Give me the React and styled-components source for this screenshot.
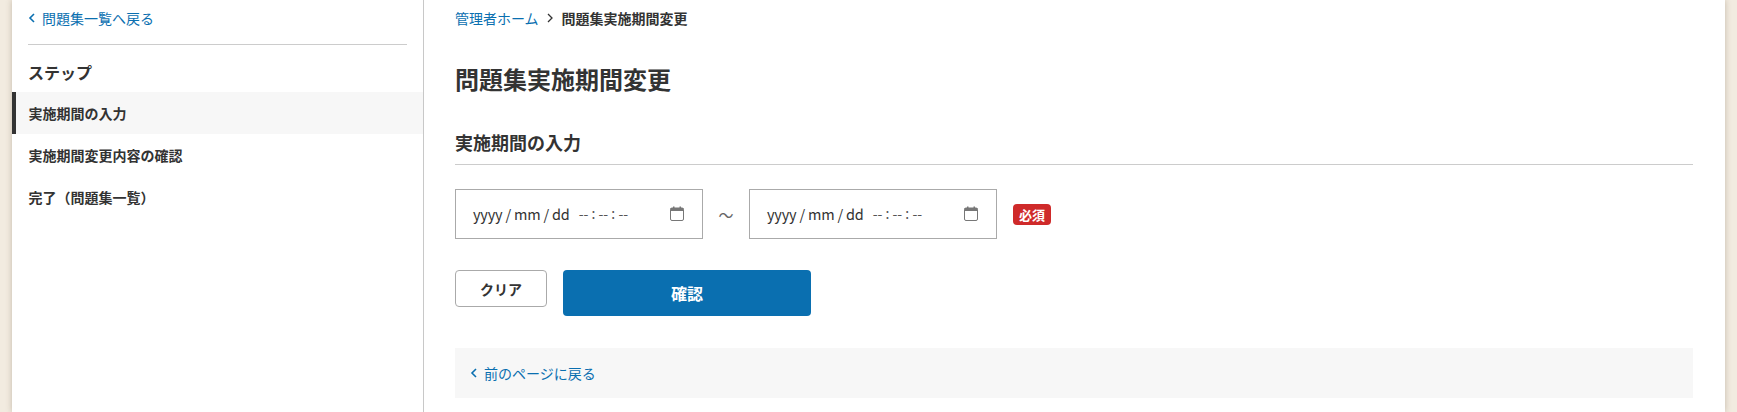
import React from 'react';
import styled, { createGlobalStyle } from 'styled-components';

const GlobalStyle = createGlobalStyle`
  html, body {
    margin: 0;
    height: 100%;
    overflow: hidden;
    background: #f2ebe0;
  }
  body {
    font-family: "Noto Sans CJK JP", "Noto Sans", sans-serif;
    color: #333;
  }
`;

const Page = styled.div`
  width: 1737px;
  height: 412px;
  padding: 0 12px;
  box-sizing: border-box;
  overflow: hidden;
`;

const Shell = styled.div`
  display: flex;
  height: 412px;
  background: #fff;
  box-shadow: 0 0 6px rgba(90, 70, 40, 0.3);
`;

const Sidebar = styled.aside`
  width: 412px;
  flex: none;
  box-sizing: border-box;
  border-right: 1px solid #c8c8c8;
`;

const BackRow = styled.div`
  margin: 0 16px;
  height: 45px;
  box-sizing: border-box;
  padding-top: 5px;
  border-bottom: 1px solid #ccc;
`;

const TextLink = styled.a`
  display: inline-flex;
  align-items: center;
  gap: 6px;
  font-size: 14px;
  line-height: 22px;
  color: #0a6fb0;
  text-decoration: none;
`;

const StepsTitle = styled.h2`
  margin: 15px 0 8px 16px;
  font-size: 16px;
  line-height: 24px;
  font-weight: 700;
`;

const StepList = styled.ul`
  list-style: none;
  margin: 0;
  padding: 0;
`;

const Step = styled.li`
  height: 42px;
  box-sizing: border-box;
  padding-left: ${p => (p.$active ? 12.5 : 16.5)}px;
  display: flex;
  align-items: center;
  font-size: 14px;
  font-weight: 700;
  background: ${p => (p.$active ? '#f7f7f7' : 'transparent')};
  border-left: ${p => (p.$active ? '4px solid #333' : 'none')};
`;

const Main = styled.main`
  flex: 1;
  padding: 7px 32px 0 31px;
  min-width: 0;
`;

const Breadcrumb = styled.nav`
  display: flex;
  align-items: center;
  gap: 7px;
  height: 22px;
  font-size: 14px;
  font-weight: 700;
`;

const CrumbLink = styled.a`
  color: #0a6fb0;
  font-weight: 400;
  text-decoration: none;
`;

const Title = styled.h1`
  margin: 32px 0 0;
  font-size: 24px;
  line-height: 36px;
  font-weight: 700;
`;

const SectionTitle = styled.h2`
  margin: 32px 0 0;
  height: 35px;
  font-size: 18px;
  line-height: 27px;
  font-weight: 700;
  border-bottom: 1px solid #ccc;
`;

const DateRow = styled.div`
  display: flex;
  align-items: center;
  margin-top: 24px;
`;

const DateField = styled.div`
  width: 248px;
  height: 50px;
  box-sizing: border-box;
  border: 1px solid #aaa;
  padding: 0 18px 2px 17px;
  display: flex;
  align-items: center;
  font-size: 14.5px;
`;

const DateText = styled.span`
  letter-spacing: -0.2px;
`;

const TimeText = styled.span`
  margin-left: 9px;
  font-size: 14px;
  flex: 1;
  color: #555;
`;

const Tilde = styled.span`
  width: 46px;
  text-align: center;
  font-size: 15px;
  color: #666;
`;

const Badge = styled.span`
  margin-left: 16px;
  width: 38px;
  height: 21px;
  display: flex;
  align-items: center;
  justify-content: center;
  background: #cf2a2a;
  border-radius: 4px;
  color: #fff;
  font-size: 13px;
  font-weight: 700;
`;

const ButtonRow = styled.div`
  display: flex;
  align-items: flex-start;
  gap: 16px;
  margin-top: 31px;
`;

const ClearButton = styled.button`
  width: 92px;
  height: 37px;
  padding: 0;
  box-sizing: border-box;
  background: #fff;
  border: 1px solid #aaa;
  border-radius: 4px;
  color: #333;
  font: 700 14px "Noto Sans CJK JP", sans-serif;
`;

const ConfirmButton = styled.button`
  width: 248px;
  height: 46px;
  padding: 0;
  border: none;
  border-radius: 4px;
  background: #0a6fb0;
  color: #fff;
  font: 700 16px "Noto Sans CJK JP", sans-serif;
`;

const BackPanel = styled.div`
  margin-top: 32px;
  height: 50px;
  box-sizing: border-box;
  padding-left: 15px;
  display: flex;
  align-items: center;
  background: #f7f7f7;
`;

const ChevronLeft = () => (
  <svg width="8" height="12" viewBox="0 0 8 12" fill="none" stroke="#0a6fb0" strokeWidth="1.6">
    <path d="M6 2 L2 6 L6 10" />
  </svg>
);

const ChevronRight = () => (
  <svg width="9" height="12" viewBox="0 0 9 12" fill="none" stroke="#333" strokeWidth="1.3">
    <path d="M2 2 L6 6 L2 10" />
  </svg>
);

const CalendarIcon = () => (
  <svg width="14" height="15" viewBox="0 0 14 15">
    <rect x="0.5" y="2" width="13" height="12.5" rx="1.5" fill="#fff" stroke="#777" />
    <rect x="0.5" y="2" width="13" height="3" fill="#777" />
    <rect x="3" y="0.5" width="1.5" height="2" fill="#777" />
    <rect x="9.5" y="0.5" width="1.5" height="2" fill="#777" />
  </svg>
);

const DateInput = () => (
  <DateField>
    <DateText>yyyy / mm / dd</DateText>
    <TimeText>-- : -- : --</TimeText>
    <CalendarIcon />
  </DateField>
);

export default function App() {
  return (
    <Page>
      <GlobalStyle />
      <Shell>
        <Sidebar>
          <BackRow>
            <TextLink href="#">
              <ChevronLeft />
              問題集一覧へ戻る
            </TextLink>
          </BackRow>
          <StepsTitle>ステップ</StepsTitle>
          <StepList>
            <Step $active>実施期間の入力</Step>
            <Step>実施期間変更内容の確認</Step>
            <Step>完了（問題集一覧）</Step>
          </StepList>
        </Sidebar>
        <Main>
          <Breadcrumb>
            <CrumbLink href="#">管理者ホーム</CrumbLink>
            <ChevronRight />
            <span>問題集実施期間変更</span>
          </Breadcrumb>
          <Title>問題集実施期間変更</Title>
          <SectionTitle>実施期間の入力</SectionTitle>
          <DateRow>
            <DateInput />
            <Tilde>～</Tilde>
            <DateInput />
            <Badge>必須</Badge>
          </DateRow>
          <ButtonRow>
            <ClearButton>クリア</ClearButton>
            <ConfirmButton>確認</ConfirmButton>
          </ButtonRow>
          <BackPanel>
            <TextLink href="#">
              <ChevronLeft />
              前のページに戻る
            </TextLink>
          </BackPanel>
        </Main>
      </Shell>
    </Page>
  );
}
